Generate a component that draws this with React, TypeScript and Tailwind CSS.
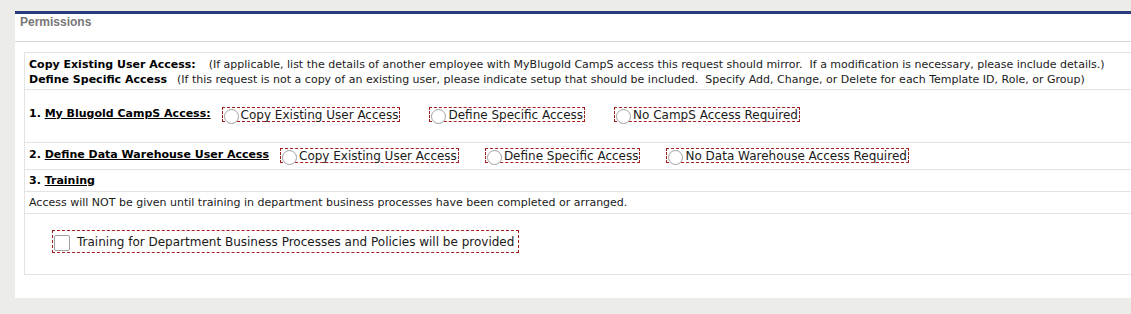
const font = { fontFamily: '"DejaVu Sans", Verdana, sans-serif' }

// radio option with dashed red outline
function RadioOpt({ label }: { label: string }) {
  return (
    <span className="inline-flex h-[15px] items-start border border-dashed border-[#a51e1e] pr-[1px] text-[12px] leading-[15px] text-[#1a1a1a]">
      <span className="mt-[1px] ml-[1px] h-[15px] w-[15px] shrink-0 rounded-full border border-[#a0a0a0] bg-white" />
      <span className="ml-[2px]">{label}</span>
    </span>
  )
}

export default function App() {
  return (
    <div className="min-h-[314px] bg-[#ecece8] pt-[11px] pl-[15px]" style={font}>
      <div className="border-t-[3px] border-[#2c3a7e] bg-white pb-[23px]">
        <div
          className="h-[28px] border-b border-[#d6d6d6] pl-[5px] pt-[1px] text-[12px] font-bold leading-[15px] text-[#777]"
          style={{ fontFamily: '"Liberation Sans", Arial, sans-serif' }}
        >
          Permissions
        </div>

        <div className="mt-[10px] ml-[9px] border border-r-0 border-[#e3e3e3] text-[11px] text-[#1a1a1a]">
          {/* 説明 */}
          <div className="h-[37px] border-b border-[#e3e3e3] pl-[4px] pt-[4px] leading-[15px]">
            <div>
              <b className="text-black">Copy Existing User Access:</b>
              <span className="ml-[13px]">
                (If applicable, list the details of another employee with MyBlugold CampS access this request should mirror.&nbsp; If a modification is necessary, please include details.)
              </span>
            </div>
            <div>
              <b className="text-black">Define Specific Access</b>
              <span className="ml-[10px]">
                (If this request is not a copy of an existing user, please indicate setup that should be included.&nbsp; Specify Add, Change, or Delete for each Template ID, Role, or Group)
              </span>
            </div>
          </div>

          {/* 1 */}
          <div className="flex h-[53px] items-center border-b border-[#e3e3e3] pl-[4px] pb-[3px]">
            <b className="text-black">
              1. <span className="underline">My Blugold CampS Access:</span>
            </b>
            <div className="ml-[11px] flex items-center gap-[29px]">
              <RadioOpt label="Copy Existing User Access" />
              <RadioOpt label="Define Specific Access" />
              <RadioOpt label="No CampS Access Required" />
            </div>
          </div>

          {/* 2 */}
          <div className="flex h-[27px] items-center border-b border-[#e3e3e3] pl-[4px] pb-[2px]">
            <b className="text-black">
              2. <span className="underline">Define Data Warehouse User Access</span>
            </b>
            <div className="ml-[11px] flex items-center gap-[26px]">
              <RadioOpt label="Copy Existing User Access" />
              <RadioOpt label="Define Specific Access" />
              <RadioOpt label="No Data Warehouse Access Required" />
            </div>
          </div>

          {/* 3 */}
          <div className="flex h-[22px] items-center border-b border-[#e3e3e3] pl-[4px] pt-[1px]">
            <b className="text-black">
              3. <span className="underline">Training</span>
            </b>
          </div>
          <div className="flex h-[22px] items-center border-b border-[#e3e3e3] pl-[4px] pt-[1px]">
            Access will NOT be given until training in department business processes have been completed or arranged.
          </div>

          <div className="h-[60px] pl-[27px] pt-[16px]">
            <span className="inline-flex h-[23px] items-center border border-dashed border-[#a51e1e] pl-[1px] pr-[4px] text-[12px] text-[#1a1a1a]">
              <span className="mt-[3px] h-[16px] w-[16px] shrink-0 rounded-[2px] border border-[#a0a0a0] bg-white" />
              <span className="ml-[7px]">Training for Department Business Processes and Policies will be provided</span>
            </span>
          </div>
        </div>
      </div>
    </div>
  )
}
